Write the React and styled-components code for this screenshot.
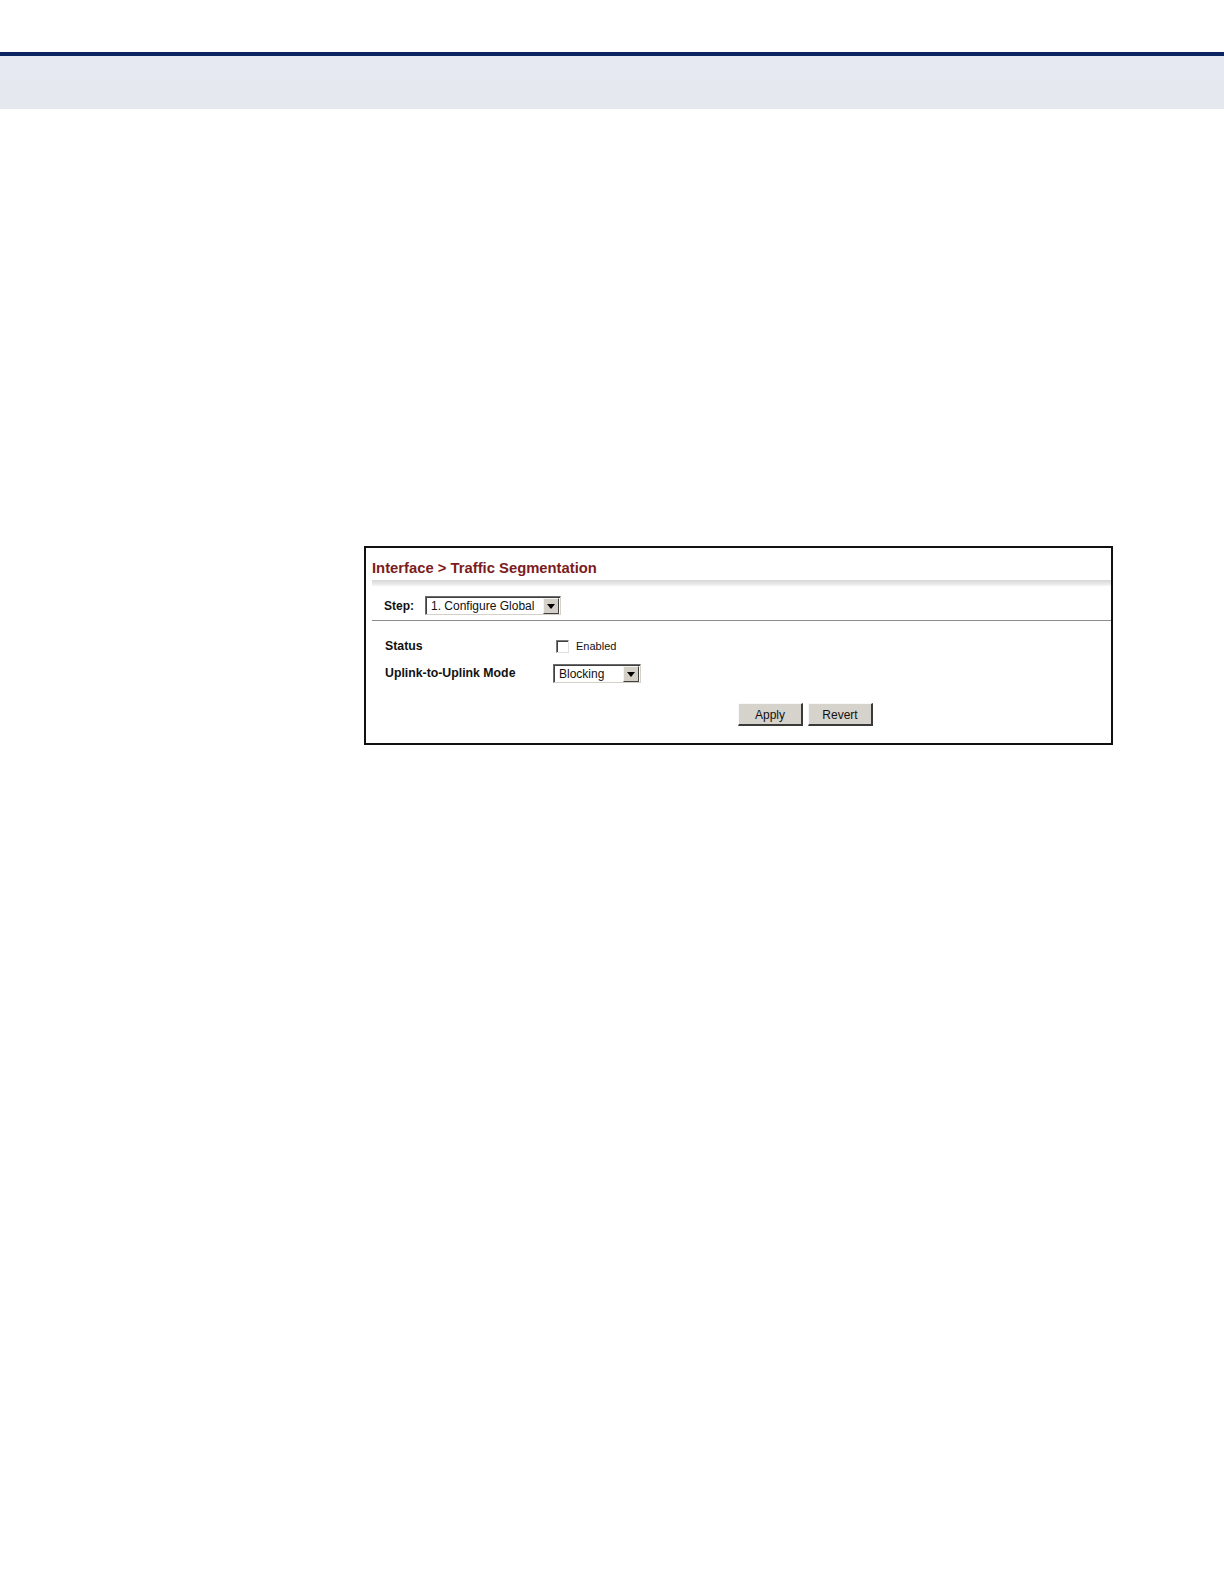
import React from 'react'
import styled, { createGlobalStyle } from 'styled-components'

const GlobalStyle = createGlobalStyle`
  html, body {
    margin: 0;
    padding: 0;
    background: #ffffff;
  }
  body {
    font-family: "Liberation Sans", Arial, sans-serif;
  }
`

const Page = styled.div`
  width: 1224px;
  min-height: 1584px;
  background: #fff;
`

const TopBand = styled.div`
  margin-top: 52px;
  border-top: 4px solid #0b2462;
  height: 53px;
  background: linear-gradient(180deg, #e6e9f1 0%, #e5e8ee 100%);
`

const Body = styled.div`
  padding: 437px 0 0 364px;
`

const Panel = styled.div`
  width: 745px;
  height: 195px;
  border: 2px solid #111;
  background: #fff;
  display: flex;
  flex-direction: column;
`

const TitleRow = styled.div`
  height: 32px;
  display: flex;
  align-items: center;
  padding: 7px 0 0 6px;
  box-sizing: border-box;
  font-size: 14.8px;
  font-weight: bold;
  color: #7b1c1c;
`

const Shade = styled.div`
  height: 6px;
  margin-left: 6px;
  background: linear-gradient(180deg, #d6d6d6 0%, #e8e8e8 60%, #f6f6f6 100%);
`

const StepRow = styled.div`
  height: 35px;
  margin-left: 6px;
  border-bottom: 1px solid #8c8c8c;
  display: flex;
  align-items: center;
  padding: 10px 0 5px 12px;
  gap: 11px;
  box-sizing: border-box;
`

const Label = styled.span`
  font-size: ${(p) => p.size || 12.3}px;
  font-weight: bold;
  color: #111;
  width: ${(p) => (p.w ? p.w + 'px' : 'auto')};
`

const Form = styled.div`
  display: flex;
  flex-direction: column;
  padding: 14px 0 0 19px;
`

const Row = styled.div`
  display: flex;
  align-items: center;
  height: ${(p) => p.h}px;
`

const SelectBox = styled.div`
  width: ${(p) => p.w}px;
  height: 19px;
  box-sizing: border-box;
  border-top: 1px solid #6b6b6b;
  border-left: 1px solid #6b6b6b;
  border-right: 1px solid #d4d0c8;
  border-bottom: 1px solid #d4d0c8;
  box-shadow: inset 1px 1px 0 #404040;
  display: flex;
  align-items: center;
  justify-content: space-between;
  padding: 1px 1px 0 5px;
  font-size: 12px;
  color: #111;
  background: #fff;
`

const Arrow = styled.div`
  width: 16px;
  height: 16px;
  box-sizing: border-box;
  background: #d4d0c8;
  border-top: 1px solid #f4f4f4;
  border-left: 1px solid #f4f4f4;
  border-right: 1px solid #404040;
  border-bottom: 1px solid #404040;
  display: flex;
  align-items: center;
  justify-content: center;
  &::after {
    content: '';
    border-left: 4px solid transparent;
    border-right: 4px solid transparent;
    border-top: 5px solid #000;
    margin-top: 1px;
  }
`

const Check = styled.div`
  width: 13px;
  height: 13px;
  box-sizing: border-box;
  border-top: 1px solid #7a7a7a;
  border-left: 1px solid #7a7a7a;
  border-right: 1px solid #e0e0e0;
  border-bottom: 1px solid #e0e0e0;
  box-shadow: inset 1px 1px 0 #404040;
  margin: 0 7px 0 3px;
`

const Small = styled.span`
  font-size: 11px;
  color: #111;
`

const Buttons = styled.div`
  display: flex;
  gap: 5px;
  padding: 14px 0 0 372px;
`

const Btn = styled.button`
  width: 65px;
  height: 23px;
  font-family: "Liberation Sans", Arial, sans-serif;
  font-size: 12px;
  color: #111;
  background: #d6d3cc;
  border-top: 1px solid #f8f8f8;
  border-left: 1px solid #f8f8f8;
  border-right: 2px solid #3a3a3a;
  border-bottom: 2px solid #3a3a3a;
  padding: 1px 0 0;
`

const Select = ({ w, value }) => (
  <SelectBox w={w}>
    <span>{value}</span>
    <Arrow />
  </SelectBox>
)

export default function App() {
  return (
    <Page>
      <GlobalStyle />
      <TopBand />
      <Body>
        <Panel>
          <TitleRow>Interface &gt; Traffic Segmentation</TitleRow>
          <Shade />
          <StepRow>
            <Label w={30} size={12}>Step:</Label>
            <Select w={136} value="1. Configure Global" />
          </StepRow>
          <Form>
            <Row h={22}>
              <Label w={168}>Status</Label>
              <Check />
              <Small>Enabled</Small>
            </Row>
            <Row h={32}>
              <Label w={168}>Uplink-to-Uplink Mode</Label>
              <Select w={88} value="Blocking" />
            </Row>
          </Form>
          <Buttons>
            <Btn>Apply</Btn>
            <Btn>Revert</Btn>
          </Buttons>
        </Panel>
      </Body>
    </Page>
  )
}
